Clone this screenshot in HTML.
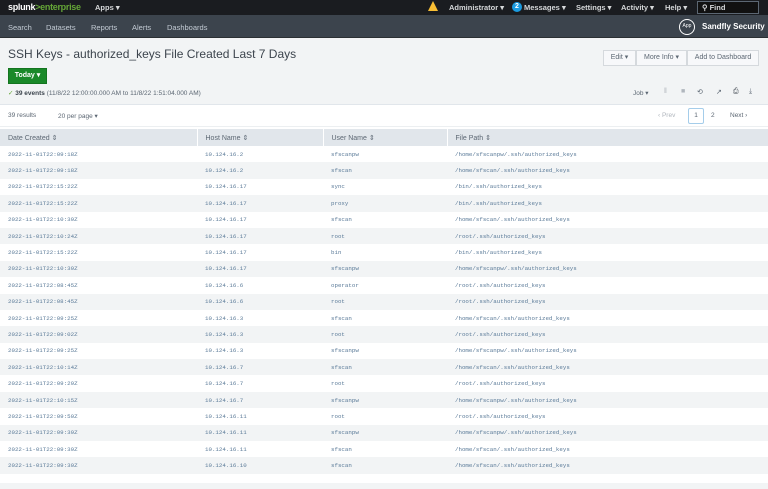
<!DOCTYPE html>
<html><head><style>
*{margin:0;padding:0;box-sizing:border-box}
body{width:768px;height:489px;overflow:hidden;background:#fff;font-family:"Liberation Sans",sans-serif;position:relative}
.a{position:absolute;white-space:nowrap}
.top{position:absolute;left:0;top:0;width:768px;height:15px;background:#1a1c20}
.nav{position:absolute;left:0;top:15px;width:768px;height:23px;background:#3c444d;border-bottom:1px solid #2b3033}
.w{color:#d6d8da;font-size:7.5px;font-weight:bold}
.n{color:#c3cbd4;font-size:7.5px}
.gray{position:absolute;left:0;top:38px;width:768px;height:67px;background:#f2f4f5;border-bottom:1px solid #e1e6eb}
.btn{position:absolute;top:50px;height:16px;border:1px solid #d5d9dd;background:#f7f8fa;color:#5c6773;font-size:7px;line-height:14px;text-align:center}
table{position:absolute;left:0;top:129px;width:768px;border-collapse:collapse}
th{background:#e1e6eb;height:17px;font-weight:normal;text-align:left;color:#5c6773;font-size:7px;padding-left:8px;border-left:1px solid #fff}
th:first-child{border-left:0}
td{height:16.4px;font-family:"Liberation Mono",monospace;font-size:5.8px;color:#5a7a98;padding-left:8px}
tr:nth-child(odd) td{background:#f2f4f5}
tr:nth-child(even) td{background:#fff}
.ic{color:#b0b6bd;font-size:7px}
</style></head><body>
<div class="top"></div>
<div class="a" style="left:8px;top:2px;font-size:9px;font-weight:bold;color:#fff;letter-spacing:-0.3px">splunk<span style="color:#65a637">&gt;enterprise</span></div>
<div class="a w" style="left:95px;top:3px">Apps ▾</div>
<div class="a" style="left:428px;top:1px;width:0;height:0;border-left:5px solid transparent;border-right:5px solid transparent;border-bottom:10px solid #f8be34"></div>
<div class="a w" style="left:449px;top:3px">Administrator ▾</div>
<div class="a" style="left:512px;top:2px;width:10px;height:10px;border-radius:50%;background:#1a9be0;color:#fff;font-size:7px;font-weight:bold;text-align:center;line-height:10px">2</div>
<div class="a w" style="left:524px;top:3px">Messages ▾</div>
<div class="a w" style="left:576px;top:3px">Settings ▾</div>
<div class="a w" style="left:621px;top:3px">Activity ▾</div>
<div class="a w" style="left:665px;top:3px">Help ▾</div>
<div class="a" style="left:697px;top:1px;width:62px;height:13px;border:1px solid #5c6773;background:#111;color:#d6d8da;font-size:7.5px;font-weight:bold;padding-left:4px;line-height:11px">⚲ Find</div>
<div class="nav"></div>
<div class="a n" style="left:8px;top:23px">Search</div>
<div class="a n" style="left:46px;top:23px">Datasets</div>
<div class="a n" style="left:91px;top:23px">Reports</div>
<div class="a n" style="left:132px;top:23px">Alerts</div>
<div class="a n" style="left:167px;top:23px">Dashboards</div>
<div class="a" style="left:679px;top:19px;width:16px;height:16px;border:1.5px solid #fff;border-radius:50%;color:#fff;font-size:5px;text-align:center;line-height:13px">App</div>
<div class="a" style="left:702px;top:22px;color:#fff;font-size:8px;font-weight:bold">Sandfly Security</div>
<div class="gray"></div>
<div class="a" style="left:8px;top:47px;font-size:12px;color:#3c444d">SSH Keys - authorized_keys File Created Last 7 Days</div>
<div class="btn" style="left:603px;width:33px">Edit ▾</div>
<div class="btn" style="left:636px;width:51px">More Info ▾</div>
<div class="btn" style="left:687px;width:72px">Add to Dashboard</div>
<div class="a" style="left:8px;top:68px;width:39px;height:16px;background:#1a8929;border:1px solid #14751f;color:#fff;font-size:7px;font-weight:bold;text-align:center;line-height:14px">Today ▾</div>
<div class="a" style="left:8px;top:89px;font-size:6.5px;color:#5c6773"><span style="color:#65a637">✓</span> <b style="color:#3c444d">39 events</b> (11/8/22 12:00:00.000 AM to 11/8/22 1:51:04.000 AM)</div>
<div class="a" style="left:633px;top:89px;font-size:6.5px;color:#5c6773">Job ▾</div>
<div class="a ic" style="left:664px;top:88px">ǁ</div>
<div class="a ic" style="left:681px;top:88px">■</div>
<div class="a" style="left:697px;top:88px;color:#5c6773;font-size:7px">⟲</div>
<div class="a" style="left:716px;top:88px;color:#5c6773;font-size:7px">↗</div>
<div class="a" style="left:733px;top:88px;color:#3c444d;font-size:7px">⎙</div>
<div class="a" style="left:749px;top:88px;color:#5c6773;font-size:7px">⤓</div>
<div class="a" style="left:8px;top:112px;font-size:6.5px;color:#5c6773">39 results</div>
<div class="a" style="left:58px;top:112px;font-size:6.5px;color:#5c6773">20 per page ▾</div>
<div class="a" style="left:658px;top:112px;font-size:6.5px;color:#b0b6bd">‹ Prev</div>
<div class="a" style="left:688px;top:108px;width:16px;height:16px;border:1px solid #a5cdea;border-radius:2px;font-size:6.5px;color:#5c6773;text-align:center;line-height:14px">1</div>
<div class="a" style="left:711px;top:112px;font-size:6.5px;color:#5c6773">2</div>
<div class="a" style="left:730px;top:112px;font-size:6.5px;color:#5c6773">Next ›</div>
<div class="a" style="left:0;top:126px;width:768px;height:1px;background:#eceff1"></div>
<table>
<tr><th style="width:197px">Date Created ⇕</th><th style="width:126px">Host Name ⇕</th><th style="width:124px">User Name ⇕</th><th>File Path ⇕</th></tr>
<tr><td>2022-11-01T22:09:18Z</td><td>10.124.16.2</td><td>sfscanpw</td><td>/home/sfscanpw/.ssh/authorized_keys</td></tr>
<tr><td>2022-11-01T22:09:18Z</td><td>10.124.16.2</td><td>sfscan</td><td>/home/sfscan/.ssh/authorized_keys</td></tr>
<tr><td>2022-11-01T22:15:22Z</td><td>10.124.16.17</td><td>sync</td><td>/bin/.ssh/authorized_keys</td></tr>
<tr><td>2022-11-01T22:15:22Z</td><td>10.124.16.17</td><td>proxy</td><td>/bin/.ssh/authorized_keys</td></tr>
<tr><td>2022-11-01T22:10:39Z</td><td>10.124.16.17</td><td>sfscan</td><td>/home/sfscan/.ssh/authorized_keys</td></tr>
<tr><td>2022-11-01T22:10:24Z</td><td>10.124.16.17</td><td>root</td><td>/root/.ssh/authorized_keys</td></tr>
<tr><td>2022-11-01T22:15:22Z</td><td>10.124.16.17</td><td>bin</td><td>/bin/.ssh/authorized_keys</td></tr>
<tr><td>2022-11-01T22:10:39Z</td><td>10.124.16.17</td><td>sfscanpw</td><td>/home/sfscanpw/.ssh/authorized_keys</td></tr>
<tr><td>2022-11-01T22:08:45Z</td><td>10.124.16.6</td><td>operator</td><td>/root/.ssh/authorized_keys</td></tr>
<tr><td>2022-11-01T22:08:45Z</td><td>10.124.16.6</td><td>root</td><td>/root/.ssh/authorized_keys</td></tr>
<tr><td>2022-11-01T22:09:25Z</td><td>10.124.16.3</td><td>sfscan</td><td>/home/sfscan/.ssh/authorized_keys</td></tr>
<tr><td>2022-11-01T22:09:02Z</td><td>10.124.16.3</td><td>root</td><td>/root/.ssh/authorized_keys</td></tr>
<tr><td>2022-11-01T22:09:25Z</td><td>10.124.16.3</td><td>sfscanpw</td><td>/home/sfscanpw/.ssh/authorized_keys</td></tr>
<tr><td>2022-11-01T22:10:14Z</td><td>10.124.16.7</td><td>sfscan</td><td>/home/sfscan/.ssh/authorized_keys</td></tr>
<tr><td>2022-11-01T22:09:29Z</td><td>10.124.16.7</td><td>root</td><td>/root/.ssh/authorized_keys</td></tr>
<tr><td>2022-11-01T22:10:15Z</td><td>10.124.16.7</td><td>sfscanpw</td><td>/home/sfscanpw/.ssh/authorized_keys</td></tr>
<tr><td>2022-11-01T22:09:50Z</td><td>10.124.16.11</td><td>root</td><td>/root/.ssh/authorized_keys</td></tr>
<tr><td>2022-11-01T22:09:39Z</td><td>10.124.16.11</td><td>sfscanpw</td><td>/home/sfscanpw/.ssh/authorized_keys</td></tr>
<tr><td>2022-11-01T22:09:39Z</td><td>10.124.16.11</td><td>sfscan</td><td>/home/sfscan/.ssh/authorized_keys</td></tr>
<tr><td>2022-11-01T22:09:30Z</td><td>10.124.16.10</td><td>sfscan</td><td>/home/sfscan/.ssh/authorized_keys</td></tr>
</table>
<div class="a" style="left:0;top:483px;width:768px;height:6px;background:#f2f4f5"></div>
</body></html>
